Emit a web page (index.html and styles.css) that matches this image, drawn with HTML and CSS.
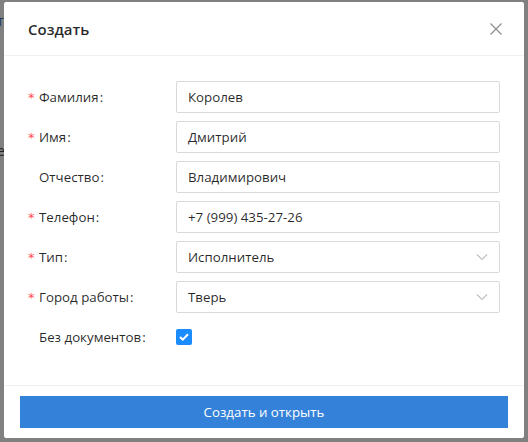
FILE: index.html
```html
<!DOCTYPE html>
<html lang="ru">
<head>
<meta charset="utf-8">
<link rel="stylesheet" href="styles.css">
</head>
<body>
<div class="backdrop">
  <div class="bg-text bg-t1">т</div>
  <div class="bg-text bg-t2">е</div>
  <div class="modal">
    <div class="modal-header">
      <div class="modal-title">Создать</div>
      <button class="close" aria-label="close">
        <svg width="12" height="12" viewBox="0 0 12 12"><path d="M0.5 0.5 L11.5 11.5 M11.5 0.5 L0.5 11.5" stroke="#8c8c8c" stroke-width="1.2" fill="none"/></svg>
      </button>
    </div>
    <div class="modal-body">
      <div class="form">
        <label class="label"><span class="req">*</span>Фамилия<span class="colon">:</span></label>
        <div class="input">Королев</div>

        <label class="label"><span class="req">*</span>Имя<span class="colon">:</span></label>
        <div class="input">Дмитрий</div>

        <label class="label"><span class="req empty"></span>Отчество<span class="colon">:</span></label>
        <div class="input">Владимирович</div>

        <label class="label"><span class="req">*</span>Телефон<span class="colon">:</span></label>
        <div class="input">+7 (999) 435-27-26</div>

        <label class="label"><span class="req">*</span>Тип<span class="colon">:</span></label>
        <div class="input select">Исполнитель
          <svg class="chev" width="12" height="8" viewBox="0 0 12 8"><path d="M1 1.5 L6 6.5 L11 1.5" stroke="#bfbfbf" stroke-width="1.1" fill="none"/></svg>
        </div>

        <label class="label"><span class="req">*</span>Город работы<span class="colon">:</span></label>
        <div class="input select">Тверь
          <svg class="chev" width="12" height="8" viewBox="0 0 12 8"><path d="M1 1.5 L6 6.5 L11 1.5" stroke="#bfbfbf" stroke-width="1.1" fill="none"/></svg>
        </div>

        <label class="label"><span class="req empty"></span>Без документов<span class="colon">:</span></label>
        <div class="check-cell">
          <span class="checkbox">
            <svg width="10" height="8" viewBox="0 0 10 8"><path d="M1 4 L3.8 6.6 L9 1.2" stroke="#fff" stroke-width="2" fill="none"/></svg>
          </span>
        </div>
      </div>
    </div>
    <div class="modal-footer">
      <button class="primary">Создать и открыть</button>
    </div>
  </div>
</div>
</body>
</html>
```
FILE: styles.css
```css
html, body {
  margin: 0;
  padding: 0;
  background: #808080;
  font-family: "Open Sans", "Noto Sans", sans-serif;
}
.backdrop {
  position: relative;
  width: 528px;
  height: 442px;
  overflow: hidden;
  padding: 2px 4px 0 4px;
  box-sizing: border-box;
}
.bg-text {
  position: absolute;
  left: -3px;
  color: #1f3a5a;
  font-size: 14px;
  line-height: 16px;
}
.bg-t1 { top: 13px; }
.bg-t2 { top: 143px; color: #222; }
.modal {
  position: relative;
  width: 520px;
  height: 436px;
  background: #fff;
  border-radius: 2px;
  display: flex;
  flex-direction: column;
}
.modal-header {
  height: 54px;
  box-sizing: border-box;
  border-bottom: 1px solid #f0f0f0;
  display: flex;
  align-items: center;
  justify-content: space-between;
  padding: 0 0 0 24px;
}
.modal-title {
  font-size: 15px;
  font-weight: 600;
  color: rgba(0,0,0,0.85);
  line-height: 22px;
  padding-top: 1px;
}
.close {
  width: 56px;
  height: 54px;
  border: 0;
  background: transparent;
  padding: 0;
  display: flex;
  align-items: center;
  justify-content: center;
}
.modal-body {
  padding: 25px 24px 0 24px;
  flex: 1;
}
.form {
  display: grid;
  grid-template-columns: 148px 324px;
  row-gap: 8px;
}
.label {
  height: 32px;
  display: flex;
  align-items: center;
  font-size: 13.3px;
  color: rgba(0,0,0,0.85);
}
.req {
  display: inline-block;
  width: 11px;
  color: #ff4d4f;
  font-family: "DejaVu Sans", sans-serif;
  font-size: 13px;
  line-height: 1;
}
.colon {
  margin-left: 1px;
}
.input {
  height: 32px;
  box-sizing: border-box;
  border: 1px solid #d9d9d9;
  border-radius: 2px;
  padding: 0 11px;
  display: flex;
  align-items: center;
  font-size: 13.3px;
  color: rgba(0,0,0,0.85);
}
.select {
  justify-content: space-between;
}
.check-cell {
  height: 32px;
  display: flex;
  align-items: center;
}
.checkbox {
  width: 16px;
  height: 16px;
  border-radius: 2px;
  background: #1a8cff;
  display: flex;
  align-items: center;
  justify-content: center;
}
.modal-footer {
  border-top: 1px solid #f0f0f0;
  padding: 10px 16px;
  height: 53px;
  box-sizing: border-box;
}
.primary {
  width: 100%;
  height: 32px;
  border: 0;
  border-radius: 0;
  background: #3481d9;
  color: #fff;
  font-family: "Open Sans", "Noto Sans", sans-serif;
  font-size: 13.3px;
}
```
